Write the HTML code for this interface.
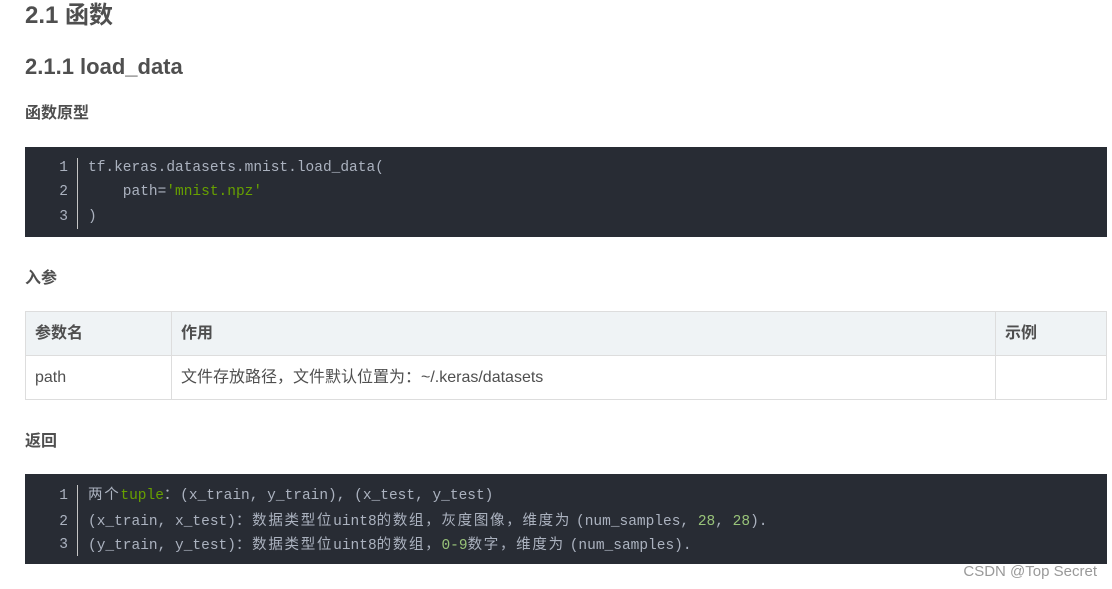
<!DOCTYPE html>
<html><head><meta charset="utf-8"><style>
*{margin:0;padding:0;box-sizing:border-box}
body{width:1112px;height:589px;background:#fff;position:relative;overflow:hidden;font-family:"Liberation Sans","Noto Sans CJK SC",sans-serif;color:#4f4f4f}
.a{position:absolute;white-space:nowrap}
.code{position:absolute;left:25px;width:1082px;height:90px;background:#282c34;font-family:"Liberation Mono","Noto Sans CJK SC",monospace;font-size:14.5px;color:#abb2bf}
.code .n{position:absolute;left:0;width:43px;text-align:right;line-height:20px}
.code .bar{position:absolute;left:52px;top:11px;width:1px;height:71px;background:#c5c5c5}
.code .l{position:absolute;left:63px;white-space:pre;line-height:20px}
.c{font-family:"Noto Sans CJK SC","WenQuanYi Zen Hei",sans-serif;font-size:14.5px;letter-spacing:1.7px}
.g{color:#67a000}
.num{color:#98c379}
table{position:absolute;left:25px;top:311px;width:1082px;border-collapse:collapse;font-size:16px;color:#4f4f4f}
td,th{border:1px solid #dddddd;padding:0 9px;text-align:left;height:44px;line-height:20px;vertical-align:middle}
th{background:#eff3f5;font-weight:bold}
</style></head><body>
<div class="a" style="left:25px;top:1px;font-size:24px;font-weight:bold;line-height:30px">2.1 函数</div>
<div class="a" style="left:25px;top:53px;font-size:22px;font-weight:bold;line-height:28px">2.1.1 load_data</div>
<div class="a" style="left:25px;top:104px;font-size:16px;font-weight:bold;line-height:20px">函数原型</div>
<div class="code" style="top:147px">
<div class="bar"></div>
<div class="n" style="top:11px">1</div><div class="l" style="top:11px">tf.keras.datasets.mnist.load_data(</div>
<div class="n" style="top:35px">2</div><div class="l" style="top:35px">    path=<span class="g">'mnist.npz'</span></div>
<div class="n" style="top:60px">3</div><div class="l" style="top:60px">)</div>
</div>
<div class="a" style="left:25px;top:269px;font-size:16px;font-weight:bold;line-height:20px">入参</div>
<table>
<tr><th style="width:146px">参数名</th><th style="width:824px">作用</th><th>示例</th></tr>
<tr><td>path</td><td>文件存放路径，文件默认位置为：~/.keras/datasets</td><td></td></tr>
</table>
<div class="a" style="left:25px;top:432px;font-size:16px;font-weight:bold;line-height:20px">返回</div>
<div class="code" style="top:474px">
<div class="bar"></div>
<div class="n" style="top:12px">1</div><div class="l" style="top:10px"><span class="c">两个</span><span class="g">tuple</span><span class="c">：</span>(x_train, y_train), (x_test, y_test)</div>
<div class="n" style="top:38px">2</div><div class="l" style="top:36px">(x_train, x_test)<span class="c">：数据类型位</span>uint8<span class="c">的数组，灰度图像，维度为 </span>(num_samples, <span class="num">28</span>, <span class="num">28</span>).</div>
<div class="n" style="top:61px">3</div><div class="l" style="top:60px">(y_train, y_test)<span class="c">：数据类型位</span>uint8<span class="c">的数组，</span><span class="num">0-9</span><span class="c">数字，维度为 </span>(num_samples).</div>
</div>
<div class="a" style="right:15px;top:564px;font-size:15px;color:#999;line-height:16px">CSDN @Top Secret</div>
</body></html>
